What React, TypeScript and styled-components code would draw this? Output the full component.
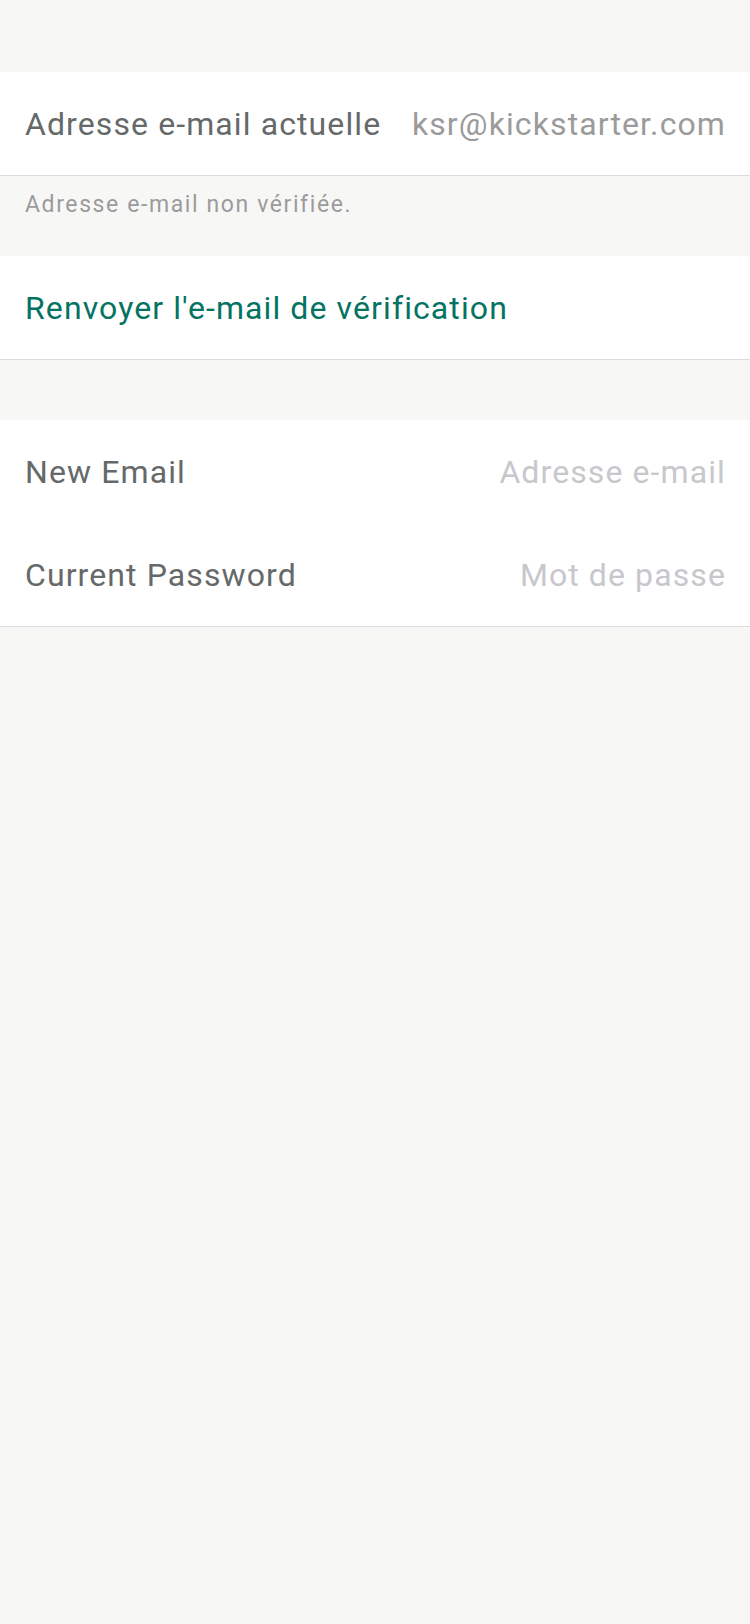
import React from "react";
import styled, { createGlobalStyle } from "styled-components";

const Global = createGlobalStyle`
  html, body { margin: 0; padding: 0; background: #f7f7f6; }
  body { font-family: Roboto, "Noto Sans", sans-serif; -webkit-font-smoothing: antialiased; }
`;

const Page = styled.div`
  min-height: 1624px;
  background: #f7f7f6;
  padding-top: 72px;
  box-sizing: border-box;
`;

const Section = styled.div<{ $gap?: number }>`
  background: #ffffff;
  border-bottom: 1px solid #dcdcdc;
  margin-top: ${(p) => p.$gap ?? 0}px;
`;

const Row = styled.div`
  height: 103px;
  display: flex;
  align-items: center;
  justify-content: space-between;
  padding: 0 24px 0 25px;
  letter-spacing: 1.1px;
`;

const Label = styled.span`
  font-size: 32px;
  color: #656969;
`;

const Value = styled.span<{ $placeholder?: boolean }>`
  font-size: 32px;
  color: ${(p) => (p.$placeholder ? "#c7c7cc" : "#9b9b9b")};
`;

const Footer = styled.div`
  padding: 15px 25px 0;
  height: 80px;
  box-sizing: border-box;
  font-size: 23px;
  line-height: 28px;
  color: #9b9b9b;
  letter-spacing: 1.6px;
`;

const Action = styled.span`
  font-size: 32px;
  color: #037362;
`;

export default function App() {
  return (
    <>
      <Global />
      <Page>
        <Section>
          <Row>
            <Label>Adresse e-mail actuelle</Label>
            <Value>ksr@kickstarter.com</Value>
          </Row>
        </Section>
        <Footer>Adresse e-mail non vérifiée.</Footer>
        <Section>
          <Row>
            <Action>Renvoyer l'e-mail de vérification</Action>
          </Row>
        </Section>
        <Section $gap={60}>
          <Row>
            <Label>New Email</Label>
            <Value $placeholder>Adresse e-mail</Value>
          </Row>
          <Row>
            <Label>Current Password</Label>
            <Value $placeholder>Mot de passe</Value>
          </Row>
        </Section>
      </Page>
    </>
  );
}
